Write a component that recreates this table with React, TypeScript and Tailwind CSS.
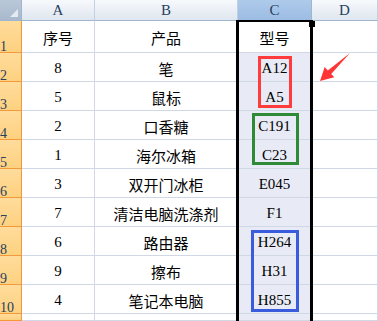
import React from "react";

type Row = { no: number; seq: string; name: string; model: string };

const ROWS: Row[] = [
  { no: 2, seq: "8", name: "笔", model: "A12" },
  { no: 3, seq: "5", name: "鼠标", model: "A5" },
  { no: 4, seq: "2", name: "口香糖", model: "C191" },
  { no: 5, seq: "1", name: "海尔冰箱", model: "C23" },
  { no: 6, seq: "3", name: "双开门冰柜", model: "E045" },
  { no: 7, seq: "7", name: "清洁电脑洗涤剂", model: "F1" },
  { no: 8, seq: "6", name: "路由器", model: "H264" },
  { no: 9, seq: "9", name: "擦布", model: "H31" },
  { no: 10, seq: "4", name: "笔记本电脑", model: "H855" },
];

const latin = "font-['Liberation_Serif',serif]";
const cjk = "font-['Noto_Sans_CJK_SC',sans-serif]";

const cell =
  "flex items-end justify-center border-b border-r border-[#d0d7e5] pb-[5px] leading-none text-black";

function RowHead({ label }: { label?: number }) {
  return (
    <div
      className={`flex items-end border-b border-r border-[#f29a3a] bg-gradient-to-b from-[#ffdc9c] to-[#fdd17f] text-[14px] leading-[11px] text-[#27415f] ${latin}`}
    >
      {label}
    </div>
  );
}

function ColHead({ label, active }: { label: string; active?: boolean }) {
  return (
    <div
      className={`flex items-end justify-center border-b border-r border-b-[#9eb6ce] pb-[2px] text-[15px] leading-none text-[#27415f] ${latin} ${
        active
          ? "border-r-[#9eb6ce] bg-gradient-to-b from-[#aecaea] to-[#9cbce3]"
          : "border-r-[#c2d1e2] bg-gradient-to-b from-[#f7f9fc] to-[#dfe6ef]"
      }`}
    >
      {label}
    </div>
  );
}

export default function App() {
  return (
    <div className="relative h-[321px] w-[378px] overflow-hidden bg-white">
      <div className="grid h-full grid-cols-[22px_73px_143px_74px_1fr] grid-rows-[21px_32px_repeat(9,29px)_1fr]">
        {/* corner */}
        <div className="relative border-b border-r border-[#9eb6ce] bg-gradient-to-b from-[#b9c7d8] to-[#a9b9cd]">
          <div className="absolute bottom-[3px] right-[3px] h-0 w-0 border-l-[8px] border-l-transparent [border-bottom:8px_solid_#e4eaf1]" />
        </div>
        <ColHead label="A" />
        <ColHead label="B" />
        <ColHead label="C" active />
        <ColHead label="D" />

        {/* header row */}
        <RowHead label={1} />
        <div className={`${cell} pb-[7px] text-[15px] ${cjk}`}>序号</div>
        <div className={`${cell} pb-[7px] text-[15px] ${cjk}`}>产品</div>
        <div className={`${cell} pb-[7px] bg-white text-[15px] ${cjk}`}>型号</div>
        <div className={cell} />

        {ROWS.map((r) => (
          <React.Fragment key={r.no}>
            <RowHead label={r.no} />
            <div className={`${cell} text-[15px] ${latin}`}>{r.seq}</div>
            <div className={`${cell} text-[15px] ${cjk}`}>{r.name}</div>
            <div className={`${cell} bg-[#e8ebf5] text-[15px] ${latin}`}>
              {r.model}
            </div>
            <div className={cell} />
          </React.Fragment>
        ))}

        {/* partial row 11 */}
        <RowHead />
        <div className={cell} />
        <div className={cell} />
        <div className={`${cell} bg-[#e8ebf5]`} />
        <div className={cell} />
      </div>

      {/* selection outline on column C */}
      <div className="absolute left-[236px] top-[20px] bottom-0 w-[77px] border-l-[3px] border-r-[3px] border-t-2 border-black" />
      <div className="absolute left-[309px] top-[21px] h-[6px] w-[6px] bg-black" />

      {/* highlight boxes */}
      <div className="absolute left-[258px] top-[56px] h-[52px] w-[34px] border-[3px] border-[#ff3b3b]" />
      <div className="absolute left-[252px] top-[113px] h-[52px] w-[47px] border-[3px] border-[#2e8a35]" />
      <div className="absolute left-[251px] top-[230px] h-[82px] w-[48px] border-[3px] border-[#3a5bdc]" />

      {/* red pointer arrow */}
      <svg
        className="absolute left-[316px] top-[50px]"
        width="38"
        height="36"
        viewBox="0 0 38 36"
      >
        <polygon
          points="4,31 8.7,17.1 11.8,20.4 34,3 15.2,24 18.3,27.3"
          fill="#ff3535"
        />
      </svg>
    </div>
  );
}
